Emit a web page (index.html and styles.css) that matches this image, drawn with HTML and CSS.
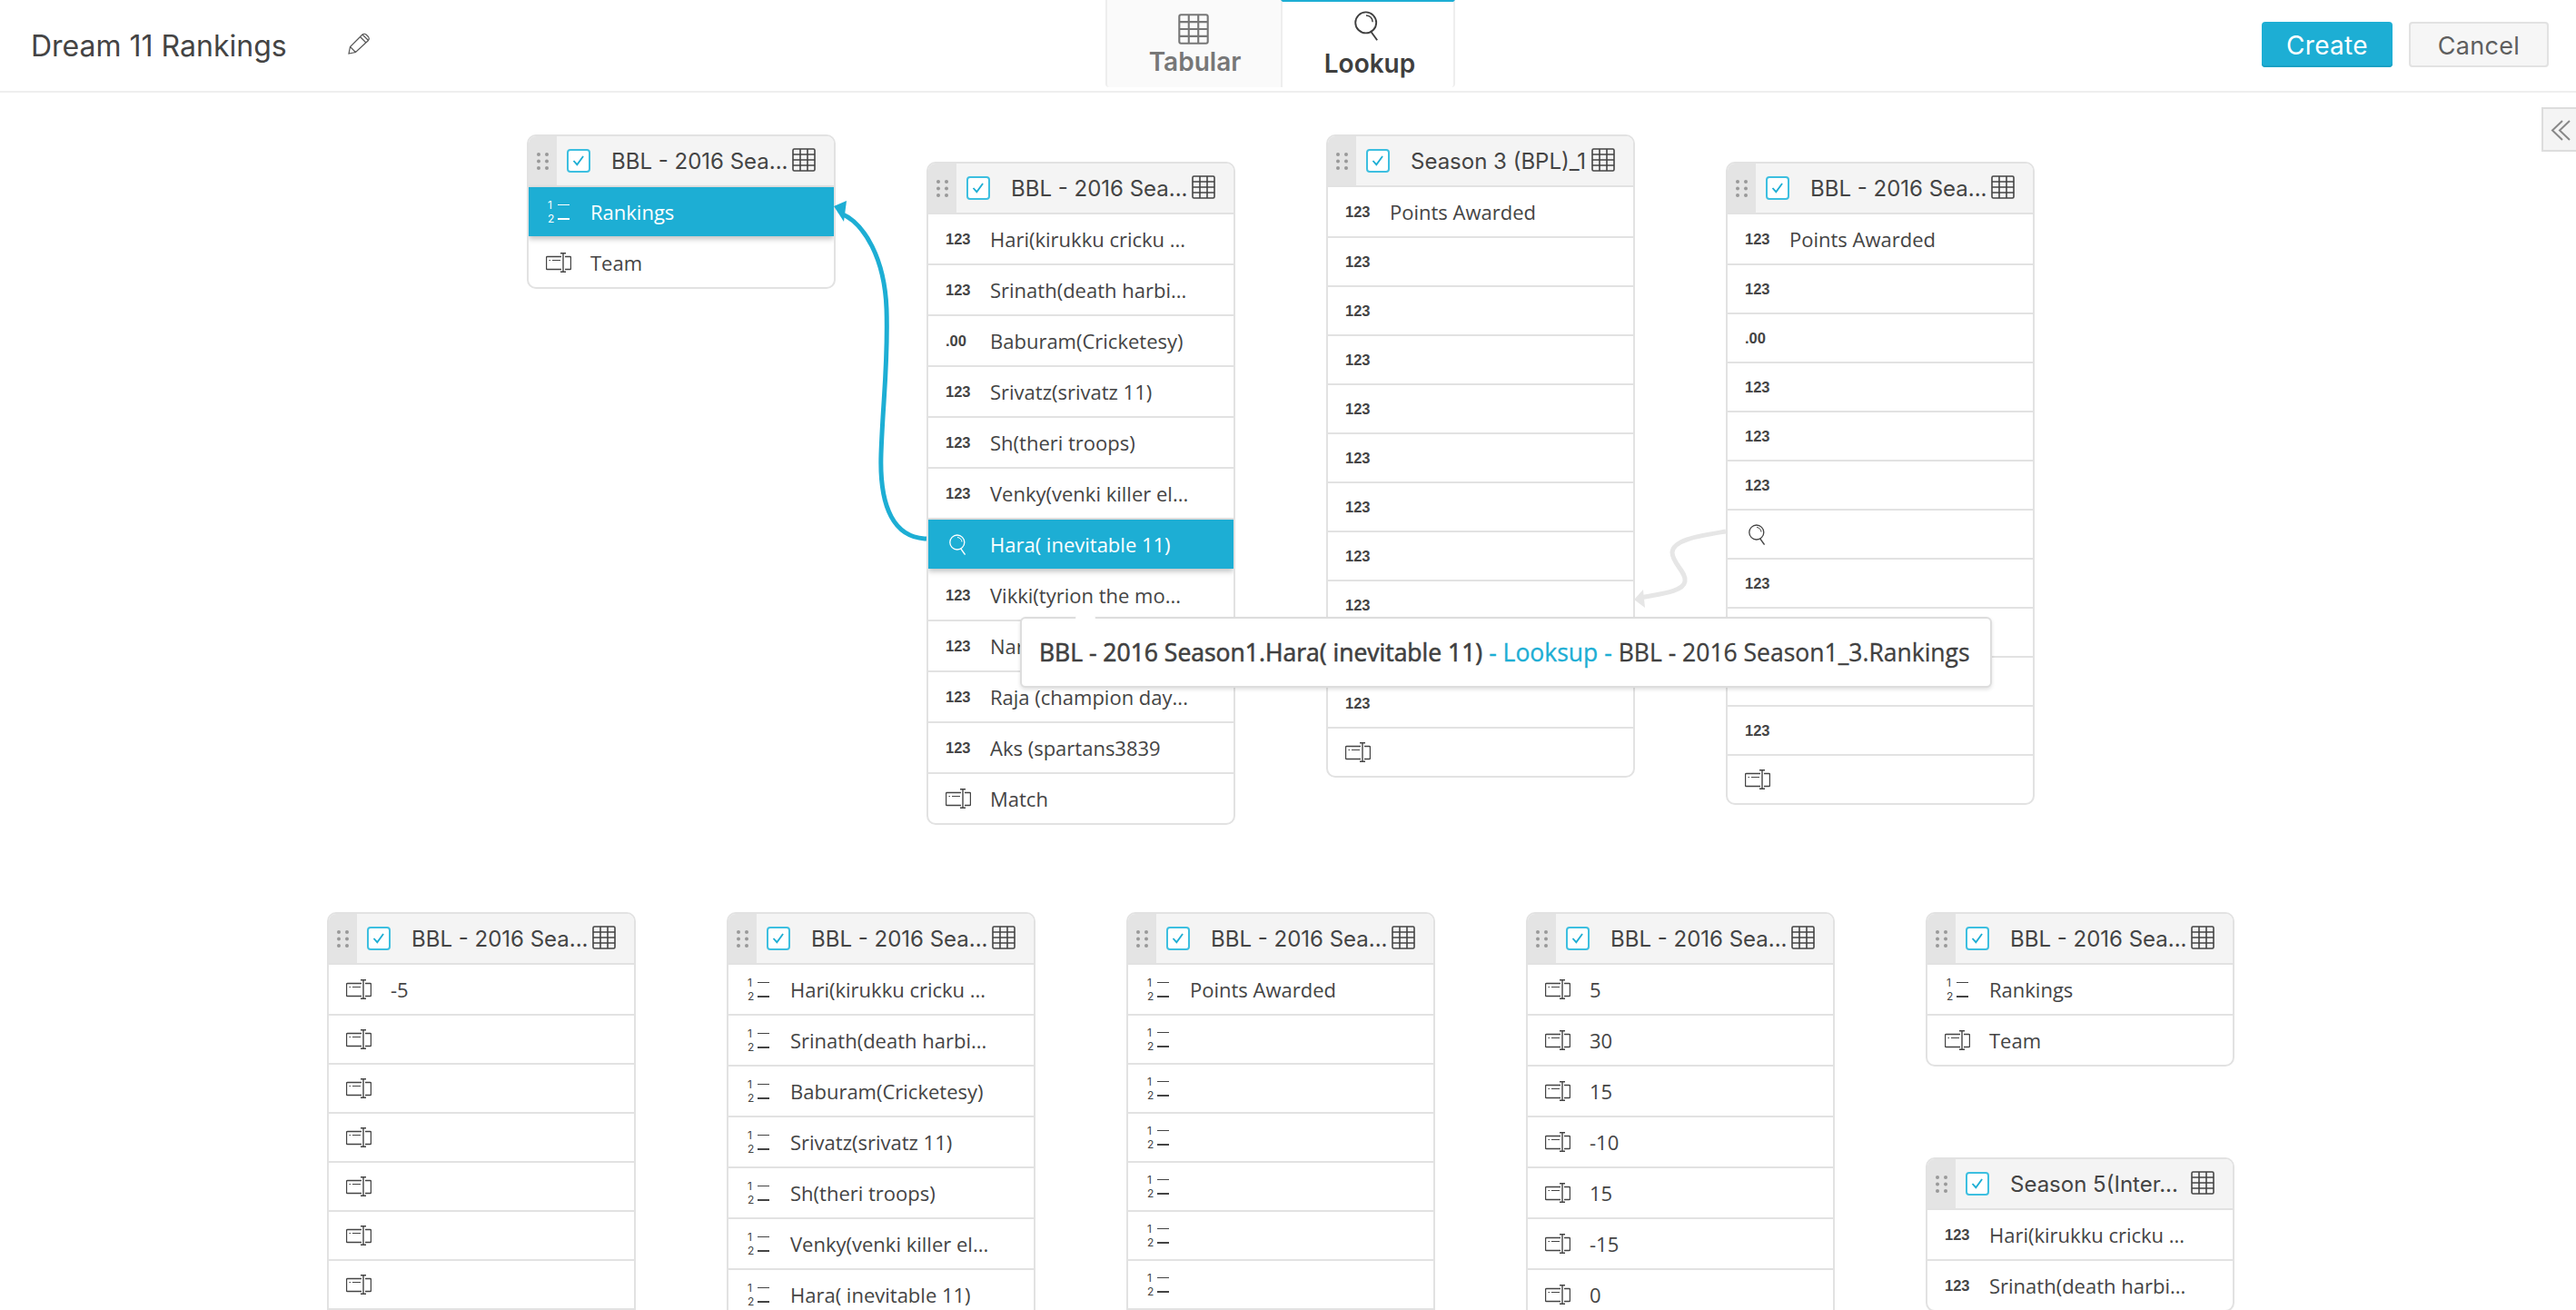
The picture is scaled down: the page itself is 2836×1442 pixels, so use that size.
FILE: index.html
```html
<!DOCTYPE html>
<html lang="en">

<head>
    <meta charset="UTF-8">
    <title>Dream 11 Rankings</title>
    <link rel="stylesheet" href="styles.css">
</head>

<body>

    <svg class="sprite" width="0" height="0">
        <symbol id="i-text" viewBox="0 0 28 22">
            <path d="M17 4.500H1.500a1 1 0 0 0-1 1v12a1 1 0 0 0 1 1H17M21 4.500h5.500a1 1 0 0 1 1 1v12a1 1 0 0 1-1 1H21" fill="none" stroke="currentColor" stroke-width="1.400"/>
            <path d="M19 1v20M16 .7h6M16 21.300h6" fill="none" stroke="currentColor" stroke-width="1.400"/>
            <path d="M3.500 8.500h1.500M7 8.500h9" fill="none" stroke="currentColor" stroke-width="1.200"/>
        </symbol>
        <symbol id="i-search" viewBox="0 0 18 23">
            <circle cx="8.800" cy="9" r="8" fill="none" stroke="currentColor" stroke-width="1.300"/>
            <path d="M12.800 16l4.700 6.500" fill="none" stroke="currentColor" stroke-width="1.300"/>
            <path d="M9 3.500c2.800.2 4.800 2.200 5 5" fill="none" stroke="currentColor" stroke-width="1"/>
        </symbol>
        <symbol id="i-grid" viewBox="0 0 26 26">
            <rect x="1" y="1" width="24" height="24" rx="1.500" fill="none" stroke="currentColor" stroke-width="1.600"/>
            <path d="M9 1v24M17 1v24M1 7h24M1 13h24M1 19h24" fill="none" stroke="currentColor" stroke-width="1.600"/>
        </symbol>
        <symbol id="i-drag" viewBox="0 0 13 19">
            <circle cx="2" cy="2" r="2" fill="currentColor"/>
            <circle cx="11" cy="2" r="2" fill="currentColor"/>
            <circle cx="2" cy="9.500" r="2" fill="currentColor"/>
            <circle cx="11" cy="9.500" r="2" fill="currentColor"/>
            <circle cx="2" cy="17" r="2" fill="currentColor"/>
            <circle cx="11" cy="17" r="2" fill="currentColor"/>
        </symbol>
        <symbol id="i-check" viewBox="0 0 26 26">
            <path d="M6.500 13l4.500 5L19 7" fill="none" stroke="currentColor" stroke-width="2.200"/>
        </symbol>
    </svg>

    <div class="topbar">
        <div class="report-title">
            <span class="report-name">Dream 11 Rankings</span>
            <svg class="pencil" viewBox="0 0 24 24">
                <path d="M1 23l1.500-7.500L16 2q2-1.500 4 0l2.500 2.500q1.500 2 0 4L8.500 21.500zM2.500 15.500l6 6M13.500 4.500l6 6M16 2l6 6" fill="none" stroke="currentColor" stroke-width="1.200"/>
            </svg>
        </div>
        <div class="tabs">
            <div class="tab">
                <svg class="tab-grid"><use href="#i-grid"/></svg>
                <span>Tabular</span>
            </div>
            <div class="tab tab-active">
                <svg class="tab-search"><use href="#i-search"/></svg>
                <span>Lookup</span>
            </div>
        </div>
        <div class="actions">
            <button class="btn btn-create">Create</button>
            <button class="btn btn-cancel">Cancel</button>
        </div>
    </div>

    <div class="canvas">

        <div class="card card-a">
            <div class="card-head">
                <div class="drag"><svg class="drag-ic"><use href="#i-drag"/></svg></div>
                <div class="check"><svg><use href="#i-check"/></svg></div>
                <div class="card-title">BBL - 2016 Sea...</div>
                <svg class="grid-ic"><use href="#i-grid"/></svg>
            </div>
            <div class="row selected"><div class="ic ic-rank"><span>1</span><span>2</span></div>Rankings</div>
            <div class="row"><div class="ic"><svg class="ic-text"><use href="#i-text"/></svg></div>Team</div>
        </div>

        <div class="card card-b">
            <div class="card-head">
                <div class="drag"><svg class="drag-ic"><use href="#i-drag"/></svg></div>
                <div class="check"><svg><use href="#i-check"/></svg></div>
                <div class="card-title">BBL - 2016 Sea...</div>
                <svg class="grid-ic"><use href="#i-grid"/></svg>
            </div>
            <div class="row"><div class="ic ic-num">123</div>Hari(kirukku cricku ...</div>
            <div class="row"><div class="ic ic-num">123</div>Srinath(death harbi...</div>
            <div class="row"><div class="ic ic-num">.00</div>Baburam(Cricketesy)</div>
            <div class="row"><div class="ic ic-num">123</div>Srivatz(srivatz 11)</div>
            <div class="row"><div class="ic ic-num">123</div>Sh(theri troops)</div>
            <div class="row"><div class="ic ic-num">123</div>Venky(venki killer el...</div>
            <div class="row selected"><div class="ic"><svg class="ic-search"><use href="#i-search"/></svg></div>Hara( inevitable 11)</div>
            <div class="row"><div class="ic ic-num">123</div>Vikki(tyrion the mo...</div>
            <div class="row"><div class="ic ic-num">123</div>Naresh(nani 11)</div>
            <div class="row"><div class="ic ic-num">123</div>Raja (champion day...</div>
            <div class="row"><div class="ic ic-num">123</div>Aks (spartans3839</div>
            <div class="row"><div class="ic"><svg class="ic-text"><use href="#i-text"/></svg></div>Match</div>
        </div>

        <div class="card card-c">
            <div class="card-head">
                <div class="drag"><svg class="drag-ic"><use href="#i-drag"/></svg></div>
                <div class="check"><svg><use href="#i-check"/></svg></div>
                <div class="card-title">Season 3 (BPL)_1</div>
                <svg class="grid-ic"><use href="#i-grid"/></svg>
            </div>
            <div class="row"><div class="ic ic-num">123</div>Points Awarded</div>
            <div class="row empty"><div class="ic ic-num">123</div></div>
            <div class="row empty"><div class="ic ic-num">123</div></div>
            <div class="row empty"><div class="ic ic-num">123</div></div>
            <div class="row empty"><div class="ic ic-num">123</div></div>
            <div class="row empty"><div class="ic ic-num">123</div></div>
            <div class="row empty"><div class="ic ic-num">123</div></div>
            <div class="row empty"><div class="ic ic-num">123</div></div>
            <div class="row empty"><div class="ic ic-num">123</div></div>
            <div class="row empty"><div class="ic ic-num">123</div></div>
            <div class="row empty"><div class="ic ic-num">123</div></div>
            <div class="row empty"><div class="ic"><svg class="ic-text"><use href="#i-text"/></svg></div></div>
        </div>

        <div class="card card-d">
            <div class="card-head">
                <div class="drag"><svg class="drag-ic"><use href="#i-drag"/></svg></div>
                <div class="check"><svg><use href="#i-check"/></svg></div>
                <div class="card-title">BBL - 2016 Sea...</div>
                <svg class="grid-ic"><use href="#i-grid"/></svg>
            </div>
            <div class="row"><div class="ic ic-num">123</div>Points Awarded</div>
            <div class="row empty"><div class="ic ic-num">123</div></div>
            <div class="row empty"><div class="ic ic-num">.00</div></div>
            <div class="row empty"><div class="ic ic-num">123</div></div>
            <div class="row empty"><div class="ic ic-num">123</div></div>
            <div class="row empty"><div class="ic ic-num">123</div></div>
            <div class="row empty"><div class="ic"><svg class="ic-search"><use href="#i-search"/></svg></div></div>
            <div class="row empty"><div class="ic ic-num">123</div></div>
            <div class="row empty"><div class="ic ic-num">123</div></div>
            <div class="row empty"><div class="ic ic-num">123</div></div>
            <div class="row empty"><div class="ic ic-num">123</div></div>
            <div class="row empty"><div class="ic"><svg class="ic-text"><use href="#i-text"/></svg></div></div>
        </div>

        <div class="card card-e">
            <div class="card-head">
                <div class="drag"><svg class="drag-ic"><use href="#i-drag"/></svg></div>
                <div class="check"><svg><use href="#i-check"/></svg></div>
                <div class="card-title">BBL - 2016 Sea...</div>
                <svg class="grid-ic"><use href="#i-grid"/></svg>
            </div>
            <div class="row"><div class="ic"><svg class="ic-text"><use href="#i-text"/></svg></div>-5</div>
            <div class="row empty"><div class="ic"><svg class="ic-text"><use href="#i-text"/></svg></div></div>
            <div class="row empty"><div class="ic"><svg class="ic-text"><use href="#i-text"/></svg></div></div>
            <div class="row empty"><div class="ic"><svg class="ic-text"><use href="#i-text"/></svg></div></div>
            <div class="row empty"><div class="ic"><svg class="ic-text"><use href="#i-text"/></svg></div></div>
            <div class="row empty"><div class="ic"><svg class="ic-text"><use href="#i-text"/></svg></div></div>
            <div class="row empty"><div class="ic"><svg class="ic-text"><use href="#i-text"/></svg></div></div>
            <div class="row empty"><div class="ic"><svg class="ic-text"><use href="#i-text"/></svg></div></div>
        </div>

        <div class="card card-f">
            <div class="card-head">
                <div class="drag"><svg class="drag-ic"><use href="#i-drag"/></svg></div>
                <div class="check"><svg><use href="#i-check"/></svg></div>
                <div class="card-title">BBL - 2016 Sea...</div>
                <svg class="grid-ic"><use href="#i-grid"/></svg>
            </div>
            <div class="row"><div class="ic ic-rank"><span>1</span><span>2</span></div>Hari(kirukku cricku ...</div>
            <div class="row"><div class="ic ic-rank"><span>1</span><span>2</span></div>Srinath(death harbi...</div>
            <div class="row"><div class="ic ic-rank"><span>1</span><span>2</span></div>Baburam(Cricketesy)</div>
            <div class="row"><div class="ic ic-rank"><span>1</span><span>2</span></div>Srivatz(srivatz 11)</div>
            <div class="row"><div class="ic ic-rank"><span>1</span><span>2</span></div>Sh(theri troops)</div>
            <div class="row"><div class="ic ic-rank"><span>1</span><span>2</span></div>Venky(venki killer el...</div>
            <div class="row"><div class="ic ic-rank"><span>1</span><span>2</span></div>Hara( inevitable 11)</div>
        </div>

        <div class="card card-g">
            <div class="card-head">
                <div class="drag"><svg class="drag-ic"><use href="#i-drag"/></svg></div>
                <div class="check"><svg><use href="#i-check"/></svg></div>
                <div class="card-title">BBL - 2016 Sea...</div>
                <svg class="grid-ic"><use href="#i-grid"/></svg>
            </div>
            <div class="row"><div class="ic ic-rank"><span>1</span><span>2</span></div>Points Awarded</div>
            <div class="row empty"><div class="ic ic-rank"><span>1</span><span>2</span></div></div>
            <div class="row empty"><div class="ic ic-rank"><span>1</span><span>2</span></div></div>
            <div class="row empty"><div class="ic ic-rank"><span>1</span><span>2</span></div></div>
            <div class="row empty"><div class="ic ic-rank"><span>1</span><span>2</span></div></div>
            <div class="row empty"><div class="ic ic-rank"><span>1</span><span>2</span></div></div>
            <div class="row empty"><div class="ic ic-rank"><span>1</span><span>2</span></div></div>
            <div class="row empty"><div class="ic ic-rank"><span>1</span><span>2</span></div></div>
        </div>

        <div class="card card-h">
            <div class="card-head">
                <div class="drag"><svg class="drag-ic"><use href="#i-drag"/></svg></div>
                <div class="check"><svg><use href="#i-check"/></svg></div>
                <div class="card-title">BBL - 2016 Sea...</div>
                <svg class="grid-ic"><use href="#i-grid"/></svg>
            </div>
            <div class="row"><div class="ic"><svg class="ic-text"><use href="#i-text"/></svg></div>5</div>
            <div class="row"><div class="ic"><svg class="ic-text"><use href="#i-text"/></svg></div>30</div>
            <div class="row"><div class="ic"><svg class="ic-text"><use href="#i-text"/></svg></div>15</div>
            <div class="row"><div class="ic"><svg class="ic-text"><use href="#i-text"/></svg></div>-10</div>
            <div class="row"><div class="ic"><svg class="ic-text"><use href="#i-text"/></svg></div>15</div>
            <div class="row"><div class="ic"><svg class="ic-text"><use href="#i-text"/></svg></div>-15</div>
            <div class="row"><div class="ic"><svg class="ic-text"><use href="#i-text"/></svg></div>0</div>
        </div>

        <div class="card card-i">
            <div class="card-head">
                <div class="drag"><svg class="drag-ic"><use href="#i-drag"/></svg></div>
                <div class="check"><svg><use href="#i-check"/></svg></div>
                <div class="card-title">BBL - 2016 Sea...</div>
                <svg class="grid-ic"><use href="#i-grid"/></svg>
            </div>
            <div class="row"><div class="ic ic-rank"><span>1</span><span>2</span></div>Rankings</div>
            <div class="row"><div class="ic"><svg class="ic-text"><use href="#i-text"/></svg></div>Team</div>
        </div>

        <div class="card card-j">
            <div class="card-head">
                <div class="drag"><svg class="drag-ic"><use href="#i-drag"/></svg></div>
                <div class="check"><svg><use href="#i-check"/></svg></div>
                <div class="card-title">Season 5(Inter...</div>
                <svg class="grid-ic"><use href="#i-grid"/></svg>
            </div>
            <div class="row"><div class="ic ic-num">123</div>Hari(kirukku cricku ...</div>
            <div class="row"><div class="ic ic-num">123</div>Srinath(death harbi...</div>
        </div>

        <!-- lookup connectors, in page coordinates -->
        <svg class="links" viewBox="0 102 2836 1340">
            <path class="link-on" d="M1020 593C985 592 968 560 970 500C972 440 978 400 976 340C974 285 952 246 926 235"/>
            <path class="head-on" d="M918 227L932 221L929 244Z"/>
            <path class="link-off" d="M1900 585C1870 590 1842 594 1841 608C1841 620 1857 630 1855 640C1853 652 1825 654 1806 658"/>
            <path class="head-off" d="M1799 660L1809 649L1811 669Z"/>
        </svg>

        <div class="tooltip">
            <span class="tip-strong">BBL - 2016 Season1.Hara( inevitable 11)</span>
            <span class="tip-link">- Looksup -</span>
            <span>BBL - 2016 Season1_3.Rankings</span>
        </div>

        <div class="collapse">
            <svg viewBox="0 0 36 45"><path d="M21 13L10 23.500L21 34M29 13L18 23.500L29 34" fill="none" stroke="currentColor" stroke-width="2"/></svg>
        </div>
    </div>

</body>

</html>
```

FILE: styles.css
```css
* {
    margin: 0;
    padding: 0;
    box-sizing: border-box;
}

body {
    height: 100vh;
    overflow: hidden;
    background-color: #fff;
    font-family: 'Open Sans', sans-serif;
    color: #444;
    display: flex;
    flex-direction: column;
}

.sprite {
    position: absolute;
}

/* top bar */

.topbar {
    height: 102px;
    flex-shrink: 0;
    border-bottom: 2px solid #eee;
    display: grid;
    grid-template-columns: 1217px auto 1fr;
}

.report-title {
    display: flex;
    align-items: center;
    padding-left: 34px;
}

.report-name {
    font-family: 'Inter', sans-serif;
    font-size: 32px;
    color: #444;
    width: 349px;
}

.pencil {
    width: 24px;
    height: 24px;
    color: #555;
    margin-top: -4px;
}

.tabs {
    display: flex;
    height: 96px;
}

.tab {
    width: 193px;
    background-color: #fafafa;
    border-left: 2px solid #eee;
    border-radius: 0 0 0 4px;
    color: #777;
    font-family: 'Inter', sans-serif;
    font-weight: 600;
    font-size: 28px;
    display: flex;
    flex-direction: column;
    align-items: center;
}

.tab-active {
    width: 192px;
    background-color: #fff;
    border-top: 2px solid #1daed4;
    border-right: 2px solid #eee;
    border-left: 2px solid #eee;
    border-radius: 0 0 4px 0;
    color: #3f3f3f;
}

.tab-grid {
    width: 34px;
    height: 34px;
    margin-top: 15px;
    margin-left: -2px;
    color: #777;
}

.tab-search {
    width: 26px;
    height: 33px;
    margin-top: 10px;
    margin-left: -4px;
    color: #3f3f3f;
}

.tab span {
    line-height: 34px;
    margin-top: 2px;
    margin-left: 2px;
}

.tab-active span {
    margin-top: 8px;
    margin-left: 4px;
}

.actions {
    display: flex;
    justify-content: flex-end;
    align-items: flex-start;
    gap: 18px;
    padding: 24px 30px 0 0;
}

.btn {
    height: 50px;
    border-radius: 4px;
    padding-top: 2px;
    font-family: 'Inter', sans-serif;
    font-size: 28px;
    letter-spacing: .3px;
}

.btn-create {
    width: 144px;
    background-color: #1daed4;
    border: none;
    box-shadow: inset 0 -2px 0 #19a0c4;
    color: #fff;
}

.btn-cancel {
    width: 154px;
    background-color: #f6f6f6;
    border: 2px solid #e2e2e2;
    font-size: 27px;
    color: #5e5e5e;
}

/* canvas and table nodes */

.canvas {
    position: relative;
    flex: 1;
    overflow: hidden;
}

.card {
    position: absolute;
    width: 340px;
    background-color: #fff;
    border: 2px solid #e2e2e2;
    border-radius: 10px;
    overflow: hidden;
}

.card-a { left: 580px; top: 46px; }
.card-b { left: 1020px; top: 76px; }
.card-c { left: 1460px; top: 46px; }
.card-d { left: 1900px; top: 76px; }
.card-e { left: 360px; top: 902px; }
.card-f { left: 800px; top: 902px; }
.card-g { left: 1240px; top: 902px; }
.card-h { left: 1680px; top: 902px; }
.card-i { left: 2120px; top: 902px; }
.card-j { left: 2120px; top: 1172px; }

.card-head {
    height: 56px;
    background-color: #f4f4f4;
    border-bottom: 2px solid #e2e2e2;
    display: flex;
    align-items: center;
}

.drag {
    width: 31px;
    height: 100%;
    background-color: #e4e4e4;
    display: flex;
    align-items: center;
    justify-content: center;
    flex-shrink: 0;
}

.drag-ic {
    width: 13px;
    height: 19px;
    color: #999;
}

.check {
    width: 26px;
    height: 26px;
    margin-left: 11px;
    background-color: #fff;
    border: 2px solid #3dbfe0;
    border-radius: 4px;
    color: #1daed4;
    flex-shrink: 0;
}

.check svg {
    display: block;
    width: 22px;
    height: 22px;
}

.card-title {
    margin-left: 23px;
    flex: 1;
    min-width: 0;
    white-space: nowrap;
    overflow: hidden;
    font-family: 'Inter', sans-serif;
    font-size: 24px;
    color: #444;
}

.grid-ic {
    width: 26px;
    height: 26px;
    margin: -2px 20px 0 0;
    color: #444;
    flex-shrink: 0;
}

.row {
    height: 56px;
    padding-left: 19px;
    border-bottom: 2px solid #e2e2e2;
    display: flex;
    align-items: center;
    font-size: 22px;
    white-space: nowrap;
    color: #444;
}

.row:last-child {
    height: 54px;
    border-bottom: none;
}

.row.empty {
    height: 54px;
}

.row.empty:last-child {
    height: 52px;
}

.row.selected {
    position: relative;
    background-color: #1daed4;
    color: #fff;
    height: 54px;
    margin-bottom: 2px;
    border-bottom: none;
    box-shadow: 0 3px 6px rgba(0, 0, 0, .25);
}

.ic {
    width: 49px;
    flex-shrink: 0;
    display: flex;
    align-items: center;
}

.ic-num {
    font-family: 'Liberation Sans', sans-serif;
    font-weight: bold;
    font-size: 16.500px;
    color: #444;
}

.ic-text {
    width: 28px;
    height: 22px;
    color: #444;
}

/* numbered list glyph: real digits, each followed by a rule */
.ic-rank {
    flex-direction: column;
    align-items: flex-start;
    padding-left: 2px;
    font-family: 'Inter', sans-serif;
    font-size: 12px;
    line-height: 15.500px;
    color: #444;
}

.ic-rank span {
    width: 24px;
    display: flex;
    align-items: center;
    justify-content: space-between;
}

.ic-rank span::after {
    content: '';
    width: 13px;
    height: 1.500px;
    background-color: currentColor;
}

.selected .ic-rank {
    color: #fff;
}

.ic-search {
    width: 18px;
    height: 23px;
    margin-left: 4px;
}

/* connectors */

.links {
    position: absolute;
    left: 0;
    top: 0;
    width: 2836px;
    height: 1340px;
    pointer-events: none;
}

.link-on {
    fill: none;
    stroke: #1daed4;
    stroke-width: 5;
}

.head-on {
    fill: #1daed4;
}

.link-off {
    fill: none;
    stroke: #e6e6e6;
    stroke-width: 5;
}

.head-off {
    fill: #e6e6e6;
}

/* tooltip */

.tooltip {
    position: absolute;
    left: 1123px;
    top: 577px;
    width: 1070px;
    height: 78px;
    padding-left: 19px;
    background-color: #fff;
    border: 2px solid #ddd;
    border-radius: 6px;
    box-shadow: 0 2px 4px rgba(0, 0, 0, .12);
    display: flex;
    align-items: center;
    gap: 7px;
    font-size: 26.500px;
    font-weight: 500;
    white-space: nowrap;
    color: #404040;
    -webkit-text-stroke: .3px currentColor;
}

.tooltip::before {
    content: '';
    position: absolute;
    left: 62px;
    top: -9px;
    width: 16px;
    height: 16px;
    background-color: #fff;
    transform: rotate(45deg);
}

.tip-strong {
    -webkit-text-stroke: .6px currentColor;
}

.tip-link {
    color: #1daed4;
}

/* side panel toggle */

.collapse {
    position: absolute;
    right: 0;
    top: 16px;
    width: 38px;
    height: 49px;
    background-color: #f4f4f4;
    border: 2px solid #ddd;
    border-right: none;
    color: #888;
}

.collapse svg {
    display: block;
    width: 36px;
    height: 45px;
}
```
